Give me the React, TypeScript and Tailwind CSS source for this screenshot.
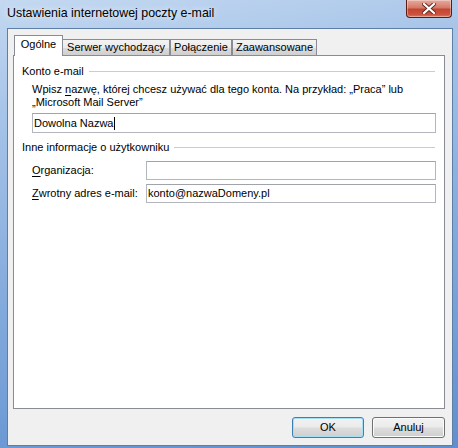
function CloseButton() {
  return (
    <div className="mr-[6px] flex h-[18px] w-[46px] items-center justify-center rounded-b-[4px] border border-t-0 border-[#5a1c14] bg-[linear-gradient(180deg,#e6ab9e_0%,#d57a6a_45%,#c4452f_55%,#cb5340_85%,#dc7a60_100%)] shadow-[inset_0_0_0_1px_rgba(255,255,255,0.35)]">
      <svg width="14" height="11" viewBox="0 0 14 11">
        <path d="M2 1 L12 10 M12 1 L2 10" stroke="#5a2a22" strokeWidth="4" strokeLinecap="square" />
        <path d="M2 1 L12 10 M12 1 L2 10" stroke="#ffffff" strokeWidth="2.2" strokeLinecap="square" />
      </svg>
    </div>
  );
}

function TitleBar() {
  return (
    <div className="flex h-[28px] items-start justify-between">
      <span className="ml-[7px] mt-[6px] text-[12.4px] leading-[15px] text-black [text-shadow:0_0_6px_rgba(255,255,255,0.95)]">
        Ustawienia internetowej poczty e-mail
      </span>
      <CloseButton />
    </div>
  );
}

function Tabs() {
  const tabs = [
    { label: "Serwer wychodzący", width: "w-[108px] -ml-px" },
    { label: "Połączenie", width: "w-[62px]" },
    { label: "Zaawansowane", width: "w-[85px]" },
  ];

  return (
    <div className="ml-[1px] flex h-[20px] items-end">
      <div className="relative z-10 -mb-px h-[21px] w-[49px] border border-b-0 border-[#898c95] bg-white pt-[2px] text-center leading-[13px]">
        Ogólne
      </div>
      {tabs.map((tab) => (
        <div
          key={tab.label}
          className={`h-[16px] border border-b-0 border-[#898c95] bg-[linear-gradient(180deg,#f3f3f3_0%,#ebebeb_50%,#dddddd_51%,#cfcfcf_100%)] pt-[1px] text-center leading-[13px] ${tab.width}`}
        >
          {tab.label}
        </div>
      ))}
    </div>
  );
}

function GroupHeader({ label }: { label: string }) {
  return (
    <div className="flex items-center gap-[5px] leading-[13px]">
      <span>{label}</span>
      <div className="mr-[1px] h-px flex-1 bg-[#c9cdd2]" />
    </div>
  );
}

function TextBox({ value, caret }: { value?: string; caret?: boolean }) {
  return (
    <div className="flex h-full flex-1 items-center border border-[#b3b7bd] border-t-[#9fa4ab] bg-white pl-[1px] leading-[13px]">
      {value}
      {caret && <span className="ml-px inline-block h-[13px] w-px bg-black" />}
    </div>
  );
}

function FieldRow({ accessKey, rest, value }: { accessKey: string; rest: string; value?: string }) {
  return (
    <div className="flex h-[19px] items-center">
      <span className="w-[114px] leading-[13px]">
        <span className="underline underline-offset-2">{accessKey}</span>
        {rest}
      </span>
      <TextBox value={value} />
    </div>
  );
}

function GeneralPanel() {
  return (
    <div className="flex-1 border border-[#898c95] bg-white pl-[8px] pr-[8px] pt-[9px]">
      <GroupHeader label="Konto e-mail" />
      <div className="pl-[10px]">
        <p className="mt-[5px] leading-[13px]">
          Wpisz <span className="underline underline-offset-2">n</span>azwę, której chcesz używać dla tego konta. Na przykład: „Praca” lub
          <br />
          „Microsoft Mail Server”
        </p>
        <div className="mt-[4px] flex h-[20px]">
          <TextBox value="Dowolna Nazwa" caret />
        </div>
      </div>

      <div className="mt-[8px]">
        <GroupHeader label="Inne informacje o użytkowniku" />
      </div>
      <div className="mt-[7px] flex flex-col gap-[4px] pl-[10px]">
        <FieldRow accessKey="O" rest="rganizacja:" />
        <FieldRow accessKey="Z" rest="wrotny adres e-mail:" value="konto@nazwaDomeny.pl" />
      </div>
    </div>
  );
}

function DialogButton({ label, isDefault }: { label: string; isDefault?: boolean }) {
  return (
    <button
      className={`flex h-[21px] items-center justify-center rounded-[3px] border bg-[linear-gradient(180deg,#f2f2f2_0%,#ebebeb_48%,#dddddd_52%,#cfcfcf_100%)] leading-[13px] ${
        isDefault
          ? "w-[72px] border-[#3c7fb1] shadow-[inset_0_0_0_1px_#a6e0f7]"
          : "w-[73px] border-[#707070] shadow-[inset_0_0_0_1px_#fbfbfb]"
      }`}
    >
      {label}
    </button>
  );
}

export default function App() {
  return (
    <div className="flex h-[448px] w-[458px] flex-col overflow-hidden bg-[linear-gradient(170deg,#c4d9f1_0%,#a8c5e9_20%,#86acdd_55%,#5f8fcf_100%)] font-['Liberation_Sans',Arial,sans-serif] text-[11px] text-black">
      <TitleBar />
      <div className="mb-[2px] ml-[7px] mr-[5px] flex flex-1 flex-col border border-[#5f7ea6] bg-[#f0f0f0] pb-[7px] pl-[5px] pr-[7px] pt-[6px]">
        <Tabs />
        <GeneralPanel />
        <div className="mt-[8px] flex justify-end gap-[8px]">
          <DialogButton label="OK" isDefault />
          <DialogButton label="Anuluj" />
        </div>
      </div>
    </div>
  );
}
